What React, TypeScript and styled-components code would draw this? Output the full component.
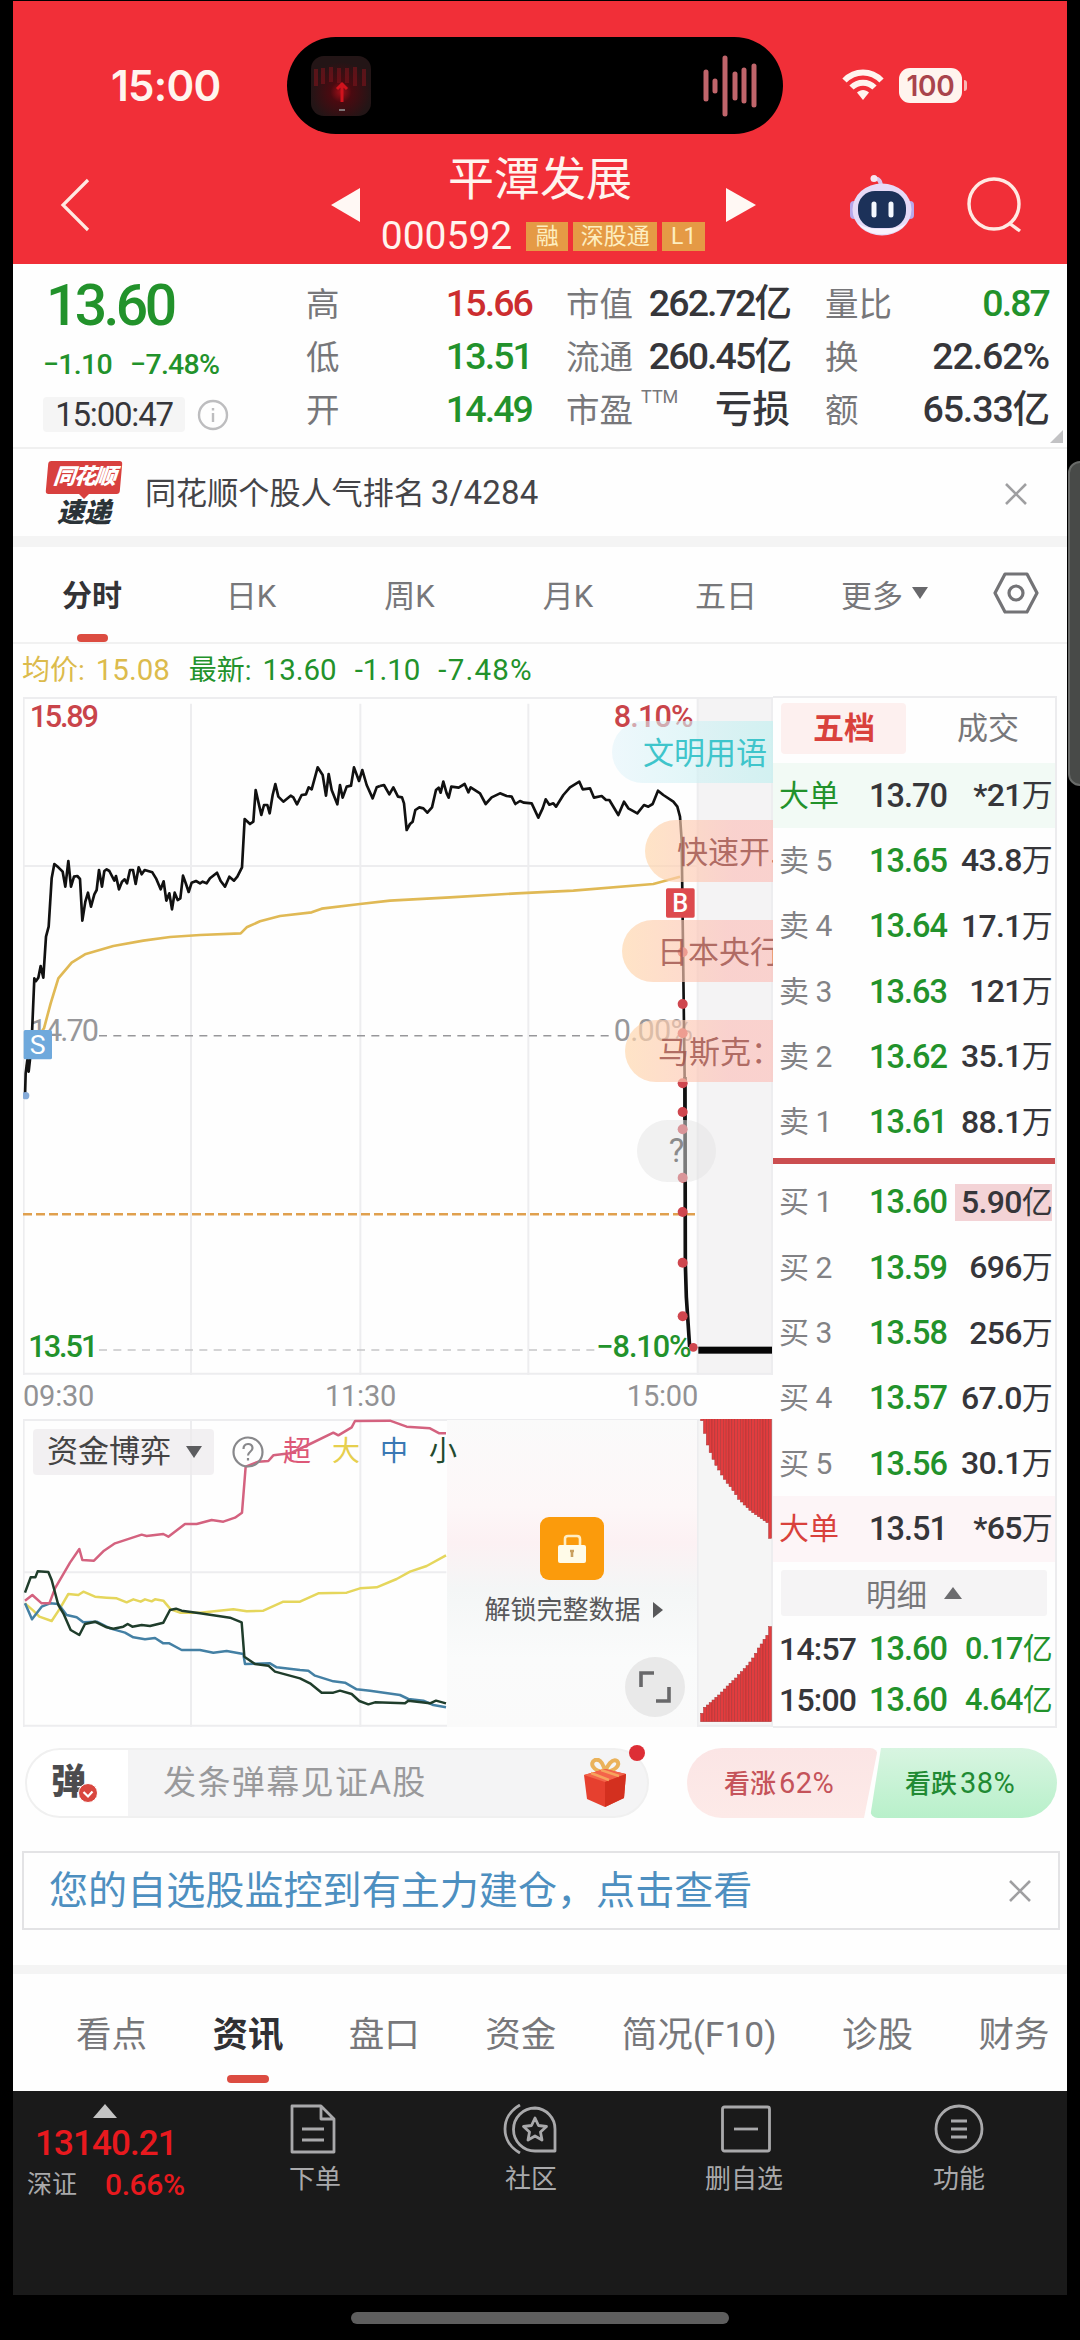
import React from "react";
import styled, { createGlobalStyle } from "styled-components";

const GREEN = "#22922b";
const RED = "#d9413c";
const INK = "#36363a";
const GREY = "#77777a";
const LINE = "#ececee";

const GlobalStyle = createGlobalStyle`
  * { box-sizing: border-box; }
  html, body { margin: 0; padding: 0; background: #000; }
  body { font-family: Roboto, "Noto Sans CJK SC", sans-serif; color: ${INK}; }
  svg { display: block; flex: none; }
`;

const Shell = styled.div`
  position: relative;
  width: 1080px;
  height: 2340px;
  padding: 1px 13px 0;
  background: #000;
  overflow: hidden;
`;
const Screen = styled.main`
  width: 1054px;
  height: 2294px;
  background: #fefefe;
  display: flex;
  flex-direction: column;
  overflow: hidden;
`;
const EdgeHandle = styled.div`
  position: absolute;
  left: 1068px;
  top: 461px;
  width: 24px;
  height: 325px;
  border-radius: 12px;
  background: #484a48;
  border: 2px solid #6a6c6a;
`;
const HomeBar = styled.div`
  width: 378px;
  height: 12px;
  margin: 17px auto 0;
  border-radius: 6px;
  background: #5e5e5e;
`;

/* ---------- header ---------- */
const Header = styled.header`
  height: 263px;
  flex: none;
  background: #f12f38;
  color: #fff4ee;
`;
const StatusBar = styled.div`
  height: 133px;
  padding-top: 36px;
  display: flex;
  align-items: center;
`;
const Clock = styled.div`
  width: 274px;
  padding-left: 98px;
  font: 600 42px/44px Inter, sans-serif;
  letter-spacing: -0.7px;
`;
const Island = styled.div`
  width: 496px;
  height: 97px;
  border-radius: 49px;
  background: #000;
  display: flex;
  align-items: center;
  justify-content: space-between;
  padding: 0 25px 0 24px;
`;
const StatusIcons = styled.div`
  margin-left: 59px;
  display: flex;
  align-items: center;
  gap: 15px;
`;
const Battery = styled.div`
  display: flex;
  align-items: center;
  gap: 2px;
  span {
    width: 63px;
    height: 35px;
    border-radius: 11px;
    background: #fff4ee;
    color: #a9444c;
    font: 600 28px/36px Inter, sans-serif;
    letter-spacing: -0.2px;
    text-align: center;
  }
  i {
    width: 3px;
    height: 11px;
    border-radius: 0 3px 3px 0;
    background: #f9b9b4;
  }
`;
const TitleBar = styled.div`
  height: 130px;
  display: grid;
  grid-template-columns: 318px 29px 366px 30px 1fr;
`;
const TitleCell = styled.div<{ $pad?: number; $gap?: number }>`
  padding: 11px 0 0 ${(p) => p.$pad ?? 0}px;
  display: flex;
  align-items: center;
  gap: ${(p) => p.$gap ?? 0}px;
`;
const StockName = styled.h1`
  margin: 19px 6px 0 0;
  font-size: 46px;
  font-weight: 400;
  line-height: 52px;
  text-align: center;
`;
const CodeRow = styled.div`
  margin-top: 16px;
  height: 30px;
  display: flex;
  align-items: center;
  justify-content: center;
  gap: 5px;
`;
const Code = styled.span`
  font-size: 39px;
  line-height: 30px;
  margin-right: 9px;
`;
const Badge = styled.span<{ $w: number }>`
  width: ${(p) => p.$w}px;
  height: 29px;
  background: #e59a45;
  color: #fdeec0;
  font-size: 23px;
  line-height: 29px;
  text-align: center;
`;

/* ---------- quote ---------- */
const Quote = styled.section`
  height: 185px;
  flex: none;
  display: grid;
  grid-template-columns: 293px 224px 222px 223px;
  border-bottom: 2px solid #f0f0f0;
  position: relative;
`;
const LastCol = styled.div`
  padding: 12px 0 0 30px;
`;
const LastPrice = styled.div`
  padding-left: 3px;
  font-size: 57px;
  font-weight: 500;
  line-height: 60px;
  letter-spacing: -3.6px;
  color: ${GREEN};
`;
const Change = styled.div`
  display: flex;
  gap: 18px;
  margin-top: 4px;
  font-size: 28.5px;
  font-weight: 500;
  line-height: 50px;
  letter-spacing: -0.7px;
  color: ${GREEN};
`;
const TimeRow = styled.div`
  margin-top: 7px;
  display: flex;
  align-items: center;
  gap: 12px;
`;
const TimePill = styled.div`
  width: 142px;
  height: 35px;
  border-radius: 4px;
  background: #f5f5f5;
  text-align: center;
  font-size: 33px;
  line-height: 35px;
  letter-spacing: -1.2px;
`;
const StatCol = styled.div<{ $ml: number }>`
  margin-left: ${(p) => p.$ml}px;
  width: ${(p) => (p.$ml ? 223 : 225)}px;
  padding-top: 14px;
`;
const Stat = styled.div`
  height: 53px;
  display: flex;
  align-items: center;
  justify-content: space-between;
  white-space: nowrap;
`;
const StatLabel = styled.span`
  font-size: 33.5px;
  line-height: 40px;
  color: ${GREY};
  sup {
    font-size: 18px;
    line-height: 0;
    vertical-align: 19px;
    margin-left: 8px;
  }
`;
const StatValue = styled.span<{ $c?: string; $ls?: number }>`
  padding-bottom: 4px;
  margin-right: -1px;
  font-size: 37.5px;
  font-weight: 500;
  line-height: 40px;
  letter-spacing: ${(p) => p.$ls ?? -1.9}px;
  color: ${(p) => p.$c ?? INK};
`;
const Corner = styled.i`
  position: absolute;
  right: 4px;
  bottom: 4px;
  border-left: 13px solid transparent;
  border-bottom: 13px solid #c2c2c4;
`;

/* ---------- news ---------- */
const News = styled.section`
  height: 87px;
  flex: none;
  display: flex;
  align-items: center;
  padding: 2px 40px 0 33px;
`;
const NewsLogo = styled.div`
  width: 76px;
  height: 66px;
  margin-right: 23px;
  display: flex;
  flex-direction: column;
  align-items: center;
`;
const LogoTop = styled.b`
  width: 74px;
  height: 33px;
  border-radius: 3px;
  background: #d8403e;
  transform: skewX(-5deg);
  color: #fff;
  font-size: 22px;
  font-weight: 900;
  font-style: italic;
  line-height: 32px;
  letter-spacing: -1.5px;
  text-align: center;
`;
const LogoTail = styled.i`
  border: 5px solid transparent;
  border-top-color: #d8403e;
  border-bottom: 0;
`;
const LogoBottom = styled.b`
  margin-top: 1px;
  font-size: 27px;
  font-weight: 900;
  font-style: italic;
  line-height: 26px;
  color: #2b3338;
`;
const NewsText = styled.div`
  flex: 1;
  font-size: 31.1px;
  line-height: 40px;
  color: #444448;
  span {
    font-size: 33px;
    margin-left: 6px;
    letter-spacing: 0.2px;
  }
`;
const Band = styled.div<{ $h: number }>`
  height: ${(p) => p.$h}px;
  flex: none;
  background: #f4f4f4;
`;

/* ---------- period tabs ---------- */
const PeriodTabs = styled.nav`
  height: 97px;
  flex: none;
  border-bottom: 2px solid #f1f1f1;
  display: grid;
  grid-template-columns: 158px 160px 157px 160px 156px 161px 1fr;
`;
const Period = styled.div<{ $on?: boolean }>`
  position: relative;
  padding-bottom: 3px;
  display: flex;
  align-items: center;
  justify-content: center;
  gap: 9px;
  font-size: ${(p) => (p.$on ? 30 : 31)}px;
  font-weight: ${(p) => (p.$on ? 700 : 400)};
  color: ${(p) => (p.$on ? "#333336" : GREY)};
`;
const Underline = styled.i<{ $w: number }>`
  position: absolute;
  bottom: 0;
  left: 50%;
  width: ${(p) => p.$w}px;
  margin-left: ${(p) => -p.$w / 2}px;
  height: 8px;
  border-radius: 4px;
  background: #dc4c41;
`;
const Averages = styled.div`
  height: 52px;
  flex: none;
  padding-left: 9px;
  display: flex;
  align-items: center;
  line-height: 53px;
  white-space: pre;
`;
const AvgItem = styled.span<{ $c?: string; $ml?: number; $cjk?: boolean; $ls?: number }>`
  color: ${(p) => p.$c ?? GREEN};
  margin-left: ${(p) => p.$ml ?? 0}px;
  font-size: ${(p) => (p.$cjk ? 28 : 29.5)}px;
  letter-spacing: ${(p) => p.$ls ?? 0}px;
`;

/* ---------- market area ---------- */
const Market = styled.section`
  height: 1031px;
  flex: none;
  margin: 0 10px 0 10px;
  display: grid;
  grid-template-columns: 750px 284px;
`;
const Charts = styled.div`
  display: flex;
  flex-direction: column;
`;
const PriceChart = styled.div`
  position: relative;
  height: 679px;
  padding-top: 1px;
  overflow: hidden;
`;
const Danmaku = styled.div<{ $x: number; $y: number; $pad: number; $cool?: boolean }>`
  position: absolute;
  left: ${(p) => p.$x - 23}px;
  top: ${(p) => p.$y - 696}px;
  right: 0;
  height: 62px;
  padding-left: ${(p) => p.$pad}px;
  border-radius: 31px 0 0 31px;
  overflow: hidden;
  white-space: nowrap;
  font-size: 31px;
  line-height: 65px;
  color: ${(p) => (p.$cool ? "#3fc5cb" : "rgba(160,84,76,.82)")};
  background: ${(p) =>
    p.$cool
      ? "linear-gradient(90deg, rgba(225,243,250,.55), rgba(196,240,240,.7))"
      : "linear-gradient(90deg, rgba(255,214,170,.66), rgba(252,192,186,.66) 70%)"};
`;
const HelpBubble = styled.div`
  position: absolute;
  left: 614px;
  top: 424px;
  width: 79px;
  height: 62px;
  border-radius: 31px;
  background: rgba(228, 228, 228, 0.5);
  color: #8b8b8b;
  font-size: 33px;
  line-height: 62px;
  text-align: center;
`;
const Hours = styled.div`
  height: 44px;
  padding: 0 75px 0 0;
  display: flex;
  justify-content: space-between;
  font-size: 29px;
  line-height: 42px;
  letter-spacing: -0.2px;
  color: #929294;
`;
const FlowChart = styled.div`
  position: relative;
  height: 308px;
  display: grid;
  grid-template-columns: 424px 250px 76px;
`;
const FlowDrawing = styled.svg`
  position: absolute;
  left: 0;
  top: 0;
`;
const Legend = styled.div`
  position: relative;
  z-index: 1;
  width: max-content;
  height: 46px;
  margin: 10px 0 0 10px;
  display: flex;
  align-items: center;
  font-size: 28px;
  line-height: 46px;
`;
const FlowSelect = styled.div`
  width: 181px;
  height: 46px;
  flex: none;
  border-radius: 4px;
  background: rgba(236, 234, 236, 0.7);
  display: flex;
  align-items: center;
  justify-content: space-between;
  padding: 0 12px 0 14px;
  font-size: 31px;
  color: #444;
  margin-right: 18px;
`;
const LegendMark = styled.span<{ $c: string; $ml: number }>`
  margin-left: ${(p) => p.$ml}px;
  color: ${(p) => p.$c};
`;
const Locked = styled.div`
  position: relative;
  margin-top: 1px;
  background: linear-gradient(180deg, #fafafa 0, #fdf7f8 28%, #fcf1f3 40%, #f4f6f6 55%, #fafbfb 78%, #fafafa 100%);
  display: flex;
  flex-direction: column;
  align-items: center;
  padding-top: 97px;
`;
const LockTile = styled.div`
  width: 64px;
  height: 63px;
  border-radius: 9px;
  background: #fb9b0c;
  display: flex;
  align-items: center;
  justify-content: center;
`;
const UnlockText = styled.div`
  margin-top: 10px;
  padding-left: 3px;
  display: flex;
  align-items: center;
  gap: 12px;
  font-size: 26px;
  line-height: 40px;
  color: #58585a;
  white-space: nowrap;
`;
const Expand = styled.div`
  position: absolute;
  left: 178px;
  top: 237px;
  width: 60px;
  height: 60px;
  border-radius: 50%;
  background: #e9e9e9;
  display: flex;
  align-items: center;
  justify-content: center;
`;

/* ---------- order book ---------- */
const Book = styled.aside`
  border: 2px solid ${LINE};
  border-width: 2px 2px 2px 0;
  display: flex;
  flex-direction: column;
`;
const BookTabs = styled.div`
  height: 65px;
  padding: 5px 6px 0 8px;
  display: grid;
  grid-template-columns: 125px 1fr;
`;
const BookTab = styled.div<{ $on?: boolean }>`
  height: 51px;
  border-radius: 4px;
  background: ${(p) => (p.$on ? "#fdf0ef" : "transparent")};
  color: ${(p) => (p.$on ? RED : GREY)};
  font-weight: ${(p) => (p.$on ? 700 : 400)};
  font-size: 31px;
  line-height: 52px;
  text-align: center;
  padding-left: ${(p) => (p.$on ? 1 : 21)}px;
`;
const Level = styled.div<{ $bg?: string; $h?: number }>`
  height: ${(p) => p.$h ?? 65.3}px;
  flex: none;
  background: ${(p) => p.$bg ?? "transparent"};
  display: grid;
  grid-template-columns: 91px 76px 1fr;
  align-items: center;
  padding: 0 3px 0 6px;
  white-space: nowrap;
  line-height: 36px;
`;
const Side = styled.span<{ $c?: string; $dark?: boolean }>`
  font-size: ${(p) => (p.$dark ? 32 : 30)}px;
  font-weight: ${(p) => (p.$dark ? 500 : 400)};
  letter-spacing: ${(p) => (p.$dark ? -0.8 : 0)}px;
  color: ${(p) => p.$c ?? (p.$dark ? INK : "#828285")};
  word-spacing: -1px;
`;
const Price = styled.span<{ $c?: string }>`
  font-size: 32.5px;
  font-weight: 500;
  letter-spacing: -1px;
  color: ${(p) => p.$c ?? GREEN};
  margin-left: -1px;
`;
const Amount = styled.span<{ $c?: string; $hot?: boolean }>`
  justify-self: end;
  font-size: ${(p) => (p.$c ? 30.5 : 32)}px;
  font-weight: 500;
  letter-spacing: -0.7px;
  color: ${(p) => p.$c ?? INK};
  padding-left: 6px;
  background: ${(p) => (p.$hot ? "#f3d3d6" : "transparent")};
  small {
    font-size: ${(p) => (p.$c ? 30 : 31)}px;
    font-weight: 400;
  }
`;
const Spread = styled.div`
  height: 6px;
  margin: 3px 0 6px;
  flex: none;
  background: #cb4e50;
`;
const DetailBtn = styled.div`
  height: 46px;
  margin: 8px 8px 8px 8px;
  flex: none;
  background: #f5f4f5;
  border-radius: 3px;
  display: flex;
  align-items: center;
  justify-content: center;
  gap: 17px;
  font-size: 30.5px;
  color: ${GREY};
`;

/* ---------- barrage row ---------- */
const Barrage = styled.section`
  height: 124px;
  flex: none;
  padding: 21px 10px 0 12px;
  display: flex;
`;
const BarrageInput = styled.div`
  position: relative;
  width: 626px;
  height: 70px;
  border: 2px solid #f0f0f0;
  border-radius: 35px;
  background: linear-gradient(90deg, #fff 101px, #f4f4f5 101px);
  display: flex;
  align-items: center;
  color: #99999b;
  line-height: 66px;
  white-space: nowrap;
`;
const DanIcon = styled.b`
  position: relative;
  width: 110px;
  flex: none;
  padding-left: 24px;
  font-size: 35px;
  font-weight: 900;
  color: #4c4c4e;
  margin-right: 26px;
  svg { position: absolute; left: 51px; top: 33px; }
`;
const Placeholder = styled.span`
  width: 420px;
  font-size: 33px;
  letter-spacing: 1.4px;
`;
const RedDot = styled.i`
  position: absolute;
  left: 602px;
  top: -5px;
  width: 16px;
  height: 16px;
  border-radius: 50%;
  background: #dd2e36;
`;
const Votes = styled.div`
  margin-left: 38px;
  display: flex;
`;
const Vote = styled.div<{ $up?: boolean }>`
  width: ${(p) => (p.$up ? 191 : 187)}px;
  height: 70px;
  margin-left: ${(p) => (p.$up ? 0 : -8)}px;
  clip-path: ${(p) =>
    p.$up ? "polygon(0 0, 100% 0, 177px 100%, 0 100%)" : "polygon(11px 0, 100% 0, 100% 100%, 0 100%)"};
  border-radius: ${(p) => (p.$up ? "35px 8px 8px 35px" : "8px 35px 35px 8px")};
  background: ${(p) =>
    p.$up ? "linear-gradient(180deg, #fbe5e5, #fdeae8)" : "linear-gradient(180deg, #d8f5e1, #b8f0ca)"};
  color: ${(p) => (p.$up ? "#c5535a" : "#218a33")};
  padding-left: ${(p) => (p.$up ? 37 : 35)}px;
  font-size: 29px;
  letter-spacing: 0.5px;
  line-height: 71px;
  white-space: nowrap;
  small {
    font-size: 26px;
    font-weight: 500;
    letter-spacing: 0;
    margin-right: 3px;
  }
`;
const Notice = styled.section`
  height: 79px;
  flex: none;
  margin: 0 7px 0 9px;
  border: 2px solid #e3e3e5;
  display: flex;
  align-items: center;
  justify-content: space-between;
  padding: 0 27px 0 25px;
  font-size: 39.1px;
  line-height: 50px;
  color: #4d8fc0;
`;
const Divider = styled(Band)`
  border-top: 35px solid #fefefe;
`;
const InfoTabs = styled.nav`
  height: 117px;
  flex: none;
  display: flex;
  padding-left: 63px;
  gap: 65.4px;
  font-size: 35.5px;
  line-height: 122px;
  color: ${GREY};
  white-space: nowrap;
`;
const InfoTab = styled.div<{ $on?: boolean }>`
  position: relative;
  font-weight: ${(p) => (p.$on ? 700 : 400)};
  color: ${(p) => (p.$on ? "#303034" : GREY)};
  i { bottom: 8px; }
`;

/* ---------- bottom bar ---------- */
const BottomBar = styled.footer`
  flex: 1;
  background: #1a1a1a;
  display: grid;
  grid-template-columns: 200px 204px 228px 198px 1fr;
  color: #a9a9ab;
`;
const IndexCell = styled.div`
  padding: 13px 0 0 14px;
`;
const IndexUp = styled.i`
  display: block;
  width: 0;
  margin-left: 66px;
  border: 12px solid transparent;
  border-top: 0;
  border-bottom: 14px solid #c4c4c4;
`;
const IndexValue = styled.div`
  padding-left: 8px;
  margin-top: 7px;
  font-size: 35px;
  font-weight: 500;
  line-height: 38px;
  letter-spacing: -0.9px;
  color: #e8191e;
`;
const IndexRow = styled.div`
  display: flex;
  align-items: center;
  gap: 28px;
  margin-top: 2px;
  font-size: 25px;
  line-height: 40px;
  b { font-size: 30px; font-weight: 500; color: #e8191e; letter-spacing: -0.4px; }
`;
const Action = styled.div<{ $shift?: number }>`
  padding: 13px ${(p) => (p.$shift ? 0 : 22)}px 0 0;
  padding-right: 0;
  display: flex;
  flex-direction: column;
  align-items: center;
  font-size: 26px;
  line-height: 34px;
  gap: 8px;
  svg { margin-left: ${(p) => p.$shift ?? 0}px; }
`;
const MenuAction = styled(Action)`
  width: 232px;
`;

/* ---------- drawings ---------- */
const Cross = () => (
  <svg width="22" height="22" viewBox="0 0 22 22" stroke="#9f9fa1" strokeWidth="2.6">
    <path d="M1 1L21 21M21 1L1 21" />
  </svg>
);

const AlbumArt = () => (
  <svg width="60" height="60" viewBox="0 0 60 60">
    <defs>
      <radialGradient id="glow" cx=".5" cy=".6" r=".5">
        <stop offset="0" stopColor="#a00f18" />
        <stop offset=".35" stopColor="#4a0a10" />
        <stop offset="1" stopColor="#231516" />
      </radialGradient>
    </defs>
    <rect width="60" height="60" rx="13" fill="url(#glow)" />
    <path d="M5 13V30M12 12V28M20 11V26M28 12V27M36 12V27M44 11V30M53 13V30" stroke="#7d141c" strokeWidth="4" opacity=".6" />
    <path d="M31 27V46M26 33L31 28L36 33" stroke="#d0131d" strokeWidth="3" fill="none" />
    <path d="M28 54H34" stroke="#7d7476" strokeWidth="2" />
  </svg>
);

const VoiceBars = () => (
  <svg width="56" height="62" viewBox="0 0 56 62" stroke="#c0656b" strokeWidth="5" strokeLinecap="round">
    <path d="M4 17V44M13 26V36M23 3V59M33 19V43M42 15V46M52 11V50" />
  </svg>
);

const Wifi = () => (
  <svg width="42" height="33" viewBox="0 0 42 33" fill="none" stroke="#fff4ee" strokeWidth="6">
    <path d="M2.5 11.5C13 .8 29 .8 39.500 11.500" />
    <path d="M9.500 18.500C16 12 26 12 32.500 18.500" />
    <path d="M15 23.500C18.500 20 23.500 20 27 23.500L21 31Z" fill="#fff4ee" stroke="none" />
  </svg>
);

const Robot = () => (
  <svg width="64" height="62" viewBox="0 0 64 62">
    <path d="M31 14C31 7 29 4 24 5" stroke="#d9c6ee" strokeWidth="4" fill="none" strokeLinecap="round" />
    <circle cx="24" cy="4.500" r="3.500" fill="#f7e6f2" />
    <rect x="0" y="27" width="8" height="18" rx="4" fill="#b7a8ea" />
    <rect x="56" y="27" width="8" height="18" rx="4" fill="#b7a8ea" />
    <ellipse cx="32" cy="35.500" rx="29.500" ry="26" fill="#e6daf7" />
    <path d="M8 49C17 64 47 64 56 49C48 57 16 57 8 49Z" fill="#f8f2fd" />
    <rect x="8" y="17" width="48" height="37" rx="17" fill="#1c3159" />
    <path d="M24 30V41M41 30V41" stroke="#f4f8ff" strokeWidth="5" strokeLinecap="round" />
  </svg>
);

const GiftBox = () => (
  <svg width="44" height="50" viewBox="0 0 44 50">
    <path d="M21 14C10 13 6 5 12 2C18 0 21 8 22 14C24 8 29 0 34 3C38 7 32 13 22 14Z" fill="none" stroke="#eab25a" strokeWidth="4" />
    <path d="M1 17L22 11L43 16L41 40L22 49L4 41Z" fill="#e6402f" />
    <path d="M1 17L22 11L43 16L22 24Z" fill="#f4644a" />
    <path d="M22 24V49L41 40L43 16Z" fill="#d3301f" />
    <path d="M8 15L26 22M18 12L36 18" stroke="#f6a35d" strokeWidth="2.500" />
  </svg>
);

const morning =
  "75,1250 77,1180 82,1140 86,1175 92,1120 96,1060 103,895 108,903 115,893 122,858 130,893 138,770 146,740 155,595 163,552 175,562 188,575 196,620 205,543 213,620 222,590 232,588 240,597 247,722 256,665 264,638 273,680 283,643 290,630 297,570 306,620 313,573 320,568 328,573 343,602 348,588 357,628 366,605 374,598 381,610 390,570 399,570 407,612 416,562 425,583 434,570 457,577 468,595 482,628 491,604 499,662 508,640 516,688 524,638 533,660 541,655 549,587 558,612 566,636 575,608 588,603 600,610 608,605 620,610 630,595 651,578 662,603 675,620 688,590 702,602 712,590 726,562 734,417 750,432 760,425 767,330 776,370 784,405 792,375 802,375 809,400 818,345 826,312 835,350 850,365 872,347 880,352 891,373 905,345 918,343 926,322 935,328 953,262 968,285 978,347 986,282 995,330 1012,373 1020,315 1028,353 1040,320 1053,317 1062,262 1077,303 1087,270 1100,315 1118,355 1130,322 1140,318";
const afternoon =
  "0,318 12,315 28,343 40,322 54,350 66,352 72,370 80,450 90,432 98,425 106,390 118,382 130,385 142,398 156,382 168,330 176,323 182,338 190,305 200,340 206,353 214,320 236,323 254,312 265,337 272,322 300,340 317,372 335,352 360,340 380,348 395,350 406,372 420,363 432,368 455,370 475,413 488,385 497,358 508,374 520,370 528,380 550,345 570,322 598,305 608,328 630,325 642,353 665,348 678,360 688,360 715,405 732,365 745,385 772,400 792,375 805,380 818,372 834,332 850,345 880,365 892,380 900,410 905,480 907,640 911,960 914,1200 914,1320";

const PriceDrawing = () => (
  <svg width="750" height="678" viewBox="0 0 2250 2034" fontFamily="Roboto, sans-serif">
    <rect x="2022" y="0" width="228" height="2034" fill="#f4f3f4" />
    <path
      d="M2 0V2034M504 20V2034M1012 20V2034M1516 20V2034M2024 0V2034M2247 0V2034M0 3H2250M0 507H2022M0 2030H2250"
      stroke="#ededef"
      strokeWidth="6"
      fill="none"
    />
    <path d="M228 1016H1760" stroke="#97979a" strokeWidth="4.500" strokeDasharray="24 19" />
    <path d="M0 1552H2022" stroke="#e0a04e" strokeWidth="7.500" strokeDasharray="27 12" />
    <path d="M228 1959H1720" stroke="#c6c6c8" strokeWidth="4" strokeDasharray="24 19" />
    <g fontSize="92" fill="#97979a">
      <text x="20" y="1033" textLength="208">14.70</text>
      <text x="1772" y="1033" textLength="238">0.00%</text>
    </g>
    <g fontSize="92" fontWeight="500">
      <text x="20" y="89" textLength="208" fill="#c9444a">15.89</text>
      <text x="1772" y="89" textLength="240" fill="#c9444a">8.10%</text>
      <text x="16" y="1979" textLength="210" fill={GREEN}>13.51</text>
      <text x="1720" y="1979" textLength="286" fill={GREEN}>−8.10%</text>
    </g>
    <g fill="none" strokeLinejoin="round">
      <g stroke="#e0b955" strokeWidth="8">
        <path
          transform="translate(-69 -51)"
          d="M80 1160L100 1090L132 1045L152 970L175 895L215 848L255 823L340 798L430 782L510 771L600 765L722 760L740 742L780 724L840 708L935 697L965 686L1080 672L1170 662L1350 652L1550 640L1720 632L1960 612L2040 590"
        />
      </g>
      <g stroke="#111" strokeWidth="8">
        <polyline transform="translate(-69 -51)" points={morning} />
        <polyline transform="translate(1071 -51)" points={afternoon} />
        <path d="M1986 1140L1987 1700L1990 1800L2000 1950" strokeWidth="11" />
      </g>
    </g>
    <rect x="2026" y="1949" width="221" height="21" fill="#060606" />
    <circle cx="8" cy="1196" r="11" fill="#86abd8" />
    <rect x="2" y="999" width="85" height="88" rx="5" fill="#6fa9dc" />
    <text x="44" y="1071" fontSize="80" fill="#fff" textAnchor="middle">S</text>
    <rect x="1929" y="574" width="86" height="88" rx="5" fill="#dd4a4e" />
    <text x="1972" y="644" fontSize="76" fontWeight="500" fill="#fff" textAnchor="middle">B</text>
    {[766, 921, 1009, 1159, 1245, 1297, 1442, 1545, 1697, 1858].map((y) => (
      <circle key={y} cx="1979" cy={y} r="15" fill="#cf464e" />
    ))}
    <circle cx="2011" cy="1951" r="13" fill="#cf464e" />
  </svg>
);

const upper: number[] = [152, 190, 225, 248, 268, 286, 300, 315, 328, 340, 350, 362, 374, 388, 396, 405, 413, 421, 428, 434, 440, 446, 452, 458, 505];
const lower: number[] = [1030, 1012, 1005, 998, 990, 982, 975, 966, 957, 948, 940, 932, 924, 914, 905, 896, 887, 876, 864, 850, 834, 822, 808, 796, 770];

const Flow = () => (
  <FlowDrawing width="750" height="308" viewBox="0 0 2250 924">
    <rect x="2022" y="0" width="228" height="924" fill="#f5f5f5" />
    <path d="M2 0V924M504 0V924M1012 0V924M2024 0V924M2247 0V924M0 3H2250M0 460H1270M0 920H2250" stroke="#ededef" strokeWidth="6" />
    <g transform="translate(1251 -147)" fill="#e23c3e" stroke="#a93436" strokeWidth="1.600">
      {upper.map((y, i) => (
        <rect key={i} x={782 + i * 8.5} y="145" width="8.500" height={y - 145} />
      ))}
      {lower.map((y, i) => (
        <rect key={i} x={782 + i * 8.5} y={y} width="8.500" height={1055 - y} />
      ))}
    </g>
    <g transform="translate(-69 -147)" fill="none" strokeWidth="7.500" strokeLinejoin="round">
      <polyline stroke="#e5d65c" points="75,700 100,722 118,740 155,753 180,715 205,672 235,675 250,665 285,680 320,683 350,685 380,697 400,688 422,695 435,688 455,694 465,688 490,692 512,718 540,728 600,728 700,718 740,724 790,722 850,695 900,695 955,670 1040,668 1080,655 1130,652 1190,627 1230,605 1280,588 1338,556" />
      <polyline stroke="#4480a4" points="75,700 96,748 125,710 150,700 175,702 200,735 230,742 250,757 290,755 330,775 375,788 400,802 435,808 465,804 490,820 508,820 545,840 600,840 640,848 680,843 730,852 735,882 810,880 830,892 900,900 925,902 945,917 1000,934 1035,938 1070,958 1110,962 1200,975 1225,987 1270,992 1300,1005 1338,1012" />
      <polyline stroke="#d4627f" points="75,692 97,675 125,700 148,700 165,655 210,578 238,537 247,570 282,572 312,542 345,520 425,494 440,498 490,492 505,500 555,462 590,462 635,450 670,455 705,443 726,428 737,290 775,275 805,273 820,256 870,250 930,222 1000,188 1015,196 1055,172 1065,153 1170,152 1220,170 1290,175 1318,190 1338,190" />
      <polyline stroke="#1f3d2b" points="75,668 92,622 106,622 113,604 145,606 155,630 175,705 190,730 212,780 238,795 255,762 285,755 320,772 340,776 370,770 383,762 397,770 425,765 450,768 490,758 510,720 528,716 545,722 600,730 690,743 725,757 733,860 765,882 805,887 825,905 900,925 930,940 965,968 1000,968 1020,962 1055,972 1078,993 1105,1003 1125,997 1215,1000 1225,992 1290,1000 1308,992 1338,1000" />
    </g>
  </FlowDrawing>
);

const DocIcon = () => (
  <svg width="46" height="50" viewBox="0 0 46 50" fill="none" stroke="currentColor" strokeWidth="2.800" strokeLinejoin="round">
    <path d="M2 2H31L44 15V48H2ZM31 2V15H44M12 25H34M12 36H34" />
  </svg>
);
const CommunityIcon = () => (
  <svg width="54" height="50" viewBox="0 0 54 50" fill="none" stroke="currentColor" strokeWidth="2.800" strokeLinejoin="round">
    <path d="M32 4A21 21 0 1 0 32 47H52V25A21 21 0 0 0 32 4Z" />
    <path d="M17 1C-3 12 -3 38 17 49" />
    <path d="M32 14L35.500 21.500L43.500 22.500L37.500 28L39 36L32 32L25 36L26.500 28L20.500 22.500L28.500 21.500Z" />
  </svg>
);
const RemoveIcon = () => (
  <svg width="50" height="50" viewBox="0 0 50 50" fill="none" stroke="currentColor" strokeWidth="2.800">
    <rect x="1.500" y="3" width="47" height="44" rx="2" />
    <path d="M13 25H37" />
  </svg>
);
const MenuIcon = () => (
  <svg width="50" height="50" viewBox="0 0 50 50" fill="none" stroke="currentColor" strokeWidth="2.800">
    <circle cx="25" cy="25" r="23" />
    <path d="M17 17H33M17 25H33M17 33H33" />
  </svg>
);

const sells = [
  ["卖 5", "13.65", "43.8", "万"],
  ["卖 4", "13.64", "17.1", "万"],
  ["卖 3", "13.63", "121", "万"],
  ["卖 2", "13.62", "35.1", "万"],
  ["卖 1", "13.61", "88.1", "万"],
];
const buys = [
  ["买 1", "13.60", "5.90", "亿"],
  ["买 2", "13.59", "696", "万"],
  ["买 3", "13.58", "256", "万"],
  ["买 4", "13.57", "67.0", "万"],
  ["买 5", "13.56", "30.1", "万"],
];

const OrderBook = () => (
  <Book>
    <BookTabs>
      <BookTab $on>五档</BookTab>
      <BookTab>成交</BookTab>
    </BookTabs>
    <Level $bg="#f2faf5">
      <Side $c={GREEN}>大单</Side>
      <Price $c={INK}>13.70</Price>
      <Amount>*21<small>万</small></Amount>
    </Level>
    {sells.map(([s, p, a, u]) => (
      <Level key={s}>
        <Side>{s}</Side>
        <Price>{p}</Price>
        <Amount>{a}<small>{u}</small></Amount>
      </Level>
    ))}
    <Spread />
    {buys.map(([s, p, a, u], i) => (
      <Level key={s}>
        <Side>{s}</Side>
        <Price>{p}</Price>
        <Amount $hot={i === 0}>{a}<small>{u}</small></Amount>
      </Level>
    ))}
    <Level $bg="#fdf5f7">
      <Side $c={RED}>大单</Side>
      <Price $c={INK}>13.51</Price>
      <Amount>*65<small>万</small></Amount>
    </Level>
    <DetailBtn>
      明细
      <svg width="18" height="12" viewBox="0 0 18 12"><path d="M0 12L9 0L18 12Z" fill="#6c6c6f" /></svg>
    </DetailBtn>
    <Level $h={51}>
      <Side $dark>14:57</Side>
      <Price>13.60</Price>
      <Amount $c={GREEN}>0.17<small>亿</small></Amount>
    </Level>
    <Level $h={51}>
      <Side $dark>15:00</Side>
      <Price>13.60</Price>
      <Amount $c={GREEN}>4.64<small>亿</small></Amount>
    </Level>
  </Book>
);

export default function App() {
  return (
    <Shell>
      <GlobalStyle />
      <Screen>
        <Header>
          <StatusBar>
            <Clock>15:00</Clock>
            <Island>
              <AlbumArt />
              <VoiceBars />
            </Island>
            <StatusIcons>
              <Wifi />
              <Battery><span>100</span><i /></Battery>
            </StatusIcons>
          </StatusBar>
          <TitleBar>
            <TitleCell $pad={47}>
              <svg width="30" height="54" viewBox="0 0 30 54" fill="none" stroke="#ffe9e2" strokeWidth="3.200">
                <path d="M28 2L3 27L28 52" />
              </svg>
            </TitleCell>
            <TitleCell>
              <svg width="29" height="34" viewBox="0 0 29 34"><path d="M29 0V34L0 17Z" fill="#fff8f4" /></svg>
            </TitleCell>
            <div>
              <StockName>平潭发展</StockName>
              <CodeRow>
                <Code>000592</Code>
                <Badge $w={42}>融</Badge>
                <Badge $w={84}>深股通</Badge>
                <Badge $w={43}>L1</Badge>
              </CodeRow>
            </div>
            <TitleCell>
              <svg width="30" height="34" viewBox="0 0 30 34"><path d="M0 0V34L30 17Z" fill="#fff8f4" /></svg>
            </TitleCell>
            <TitleCell $pad={94} $gap={53}>
              <Robot />
              <svg width="56" height="56" viewBox="0 0 56 56" fill="none" stroke="#ffe9e2" strokeWidth="3.400">
                <circle cx="27" cy="27" r="25" />
                <path d="M42 46L53 54" />
              </svg>
            </TitleCell>
          </TitleBar>
        </Header>

        <Quote>
          <LastCol>
            <LastPrice>13.60</LastPrice>
            <Change><span>−1.10</span><span>−7.48%</span></Change>
            <TimeRow>
              <TimePill>15:00:47</TimePill>
              <svg width="32" height="32" viewBox="0 0 32 32" fill="none" stroke="#bdbdbf" strokeWidth="2.400">
                <circle cx="16" cy="16" r="14" />
                <path d="M16 14V23M16 9V11.500" />
              </svg>
            </TimeRow>
          </LastCol>
          <StatCol $ml={0}>
            <Stat><StatLabel>高</StatLabel><StatValue $c="#cc2d2f">15.66</StatValue></Stat>
            <Stat><StatLabel>低</StatLabel><StatValue $c={GREEN}>13.51</StatValue></Stat>
            <Stat><StatLabel>开</StatLabel><StatValue $c={GREEN}>14.49</StatValue></Stat>
          </StatCol>
          <StatCol $ml={36}>
            <Stat><StatLabel>市值</StatLabel><StatValue>262.72亿</StatValue></Stat>
            <Stat><StatLabel>流通</StatLabel><StatValue>260.45亿</StatValue></Stat>
            <Stat><StatLabel>市盈<sup>TTM</sup></StatLabel><StatValue $ls={0}>亏损</StatValue></Stat>
          </StatCol>
          <StatCol $ml={73}>
            <Stat><StatLabel>量比</StatLabel><StatValue $c={GREEN}>0.87</StatValue></Stat>
            <Stat><StatLabel>换</StatLabel><StatValue $ls={-1.1}>22.62%</StatValue></Stat>
            <Stat><StatLabel>额</StatLabel><StatValue $ls={-1.1}>65.33亿</StatValue></Stat>
          </StatCol>
          <Corner />
        </Quote>

        <News>
          <NewsLogo>
            <LogoTop>同花顺</LogoTop>
            <LogoTail />
            <LogoBottom>速递</LogoBottom>
          </NewsLogo>
          <NewsText>同花顺个股人气排名<span>3/4284</span></NewsText>
          <Cross />
        </News>
        <Band $h={11} />

        <PeriodTabs>
          <Period $on>分时<Underline $w={31} /></Period>
          <Period>日K</Period>
          <Period>周K</Period>
          <Period>月K</Period>
          <Period>五日</Period>
          <Period>
            更多
            <svg width="16" height="12" viewBox="0 0 16 12"><path d="M0 0H16L8 12Z" fill="#68686b" /></svg>
          </Period>
          <Period>
            <svg width="46" height="42" viewBox="0 0 46 42" fill="none" stroke="#737376" strokeWidth="3.200" strokeLinejoin="round">
              <path d="M12 2H34L44 21L34 40H12L2 21Z" />
              <circle cx="23" cy="21" r="7" />
            </svg>
          </Period>
        </PeriodTabs>

        <Averages>
          <AvgItem $c="#dcbb4c" $cjk>均价: </AvgItem>
          <AvgItem $c="#dcbb4c" $ml={4}>15.08</AvgItem>
          <AvgItem $cjk $ml={19}>最新: </AvgItem>
          <AvgItem $ml={4}>13.60</AvgItem>
          <AvgItem $ml={18}>-1.10</AvgItem>
          <AvgItem $ml={18} $ls={1.2}>-7.48%</AvgItem>
        </Averages>

        <Market>
          <Charts>
            <PriceChart>
              <PriceDrawing />
              <Danmaku $x={612} $y={721} $pad={31} $cool>文明用语</Danmaku>
              <Danmaku $x={645} $y={820} $pad={32}>快速开.</Danmaku>
              <Danmaku $x={622} $y={920} $pad={35}>日本央行</Danmaku>
              <Danmaku $x={625} $y={1020} $pad={33}>马斯克：</Danmaku>
              <HelpBubble>?</HelpBubble>
            </PriceChart>
            <Hours><span>09:30</span><span>11:30</span><span>15:00</span></Hours>
            <FlowChart>
              <Flow />
              <Legend>
                <FlowSelect>
                  资金博弈
                  <svg width="16" height="12" viewBox="0 0 16 12"><path d="M0 0H16L8 12Z" fill="#5c5c5f" /></svg>
                </FlowSelect>
                <svg width="32" height="32" viewBox="0 0 32 32" fill="none" stroke="#88888b" strokeWidth="2.200">
                  <circle cx="16" cy="16" r="14.500" />
                  <path d="M11.500 13C11.500 6.500 20.500 6.500 20.500 12C20.500 16 16 15.500 16 19.500M16 22V24.500" />
                </svg>
                <LegendMark $c="#dd5878" $ml={19}>超</LegendMark>
                <LegendMark $c="#e6cf4e" $ml={21}>大</LegendMark>
                <LegendMark $c="#3a78b4" $ml={20}>中</LegendMark>
                <LegendMark $c="#234a2e" $ml={21}>小</LegendMark>
              </Legend>
              <Locked>
                <LockTile>
                  <svg width="30" height="30" viewBox="0 0 30 30">
                    <path d="M8 12V5Q8 2 11 2H20Q23 2 23 5V12" fill="none" stroke="#ffedc4" strokeWidth="2.600" />
                    <rect x="1" y="11" width="28" height="18" rx="2" fill="#fffbe8" />
                    <path d="M15 16V23M13 17H17" stroke="#c9a060" strokeWidth="2.600" />
                  </svg>
                </LockTile>
                <UnlockText>
                  解锁完整数据
                  <svg width="10" height="16" viewBox="0 0 10 16"><path d="M0 0L10 8L0 16Z" fill="#58585a" /></svg>
                </UnlockText>
                <Expand>
                  <svg width="32" height="32" viewBox="0 0 32 32" fill="none" stroke="#68686a" strokeWidth="3.600">
                    <path d="M2 16V2H15M30 16V30H17" />
                  </svg>
                </Expand>
              </Locked>
            </FlowChart>
          </Charts>
          <OrderBook />
        </Market>

        <Barrage>
          <BarrageInput>
            <DanIcon>
              弹
              <svg width="20" height="20" viewBox="0 0 20 20">
                <circle cx="10" cy="10" r="9.500" fill="#d9473f" stroke="#fff" />
                <path d="M5.500 9L10 13.500L14.500 8.500" fill="none" stroke="#fff" strokeWidth="2.200" />
              </svg>
            </DanIcon>
            <Placeholder>发条弹幕见证A股</Placeholder>
            <GiftBox />
            <RedDot />
          </BarrageInput>
          <Votes>
            <Vote $up><small>看涨</small>62%</Vote>
            <Vote><small>看跌</small>38%</Vote>
          </Votes>
        </Barrage>

        <Notice>
          您的自选股监控到有主力建仓，点击查看
          <Cross />
        </Notice>
        <Divider $h={44} />

        <InfoTabs>
          <InfoTab>看点</InfoTab>
          <InfoTab $on>资讯<Underline $w={42} /></InfoTab>
          <InfoTab>盘口</InfoTab>
          <InfoTab>资金</InfoTab>
          <InfoTab>简况(F10)</InfoTab>
          <InfoTab>诊股</InfoTab>
          <InfoTab>财务</InfoTab>
        </InfoTabs>

        <BottomBar>
          <IndexCell>
            <IndexUp />
            <IndexValue>13140.21</IndexValue>
            <IndexRow>深证<b>0.66%</b></IndexRow>
          </IndexCell>
          <Action $shift={-5}><DocIcon />下单</Action>
          <Action $shift={-3}><CommunityIcon />社区</Action>
          <Action $shift={4}><RemoveIcon />删自选</Action>
          <MenuAction><MenuIcon />功能</MenuAction>
        </BottomBar>
      </Screen>
      <HomeBar />
      <EdgeHandle />
    </Shell>
  );
}
